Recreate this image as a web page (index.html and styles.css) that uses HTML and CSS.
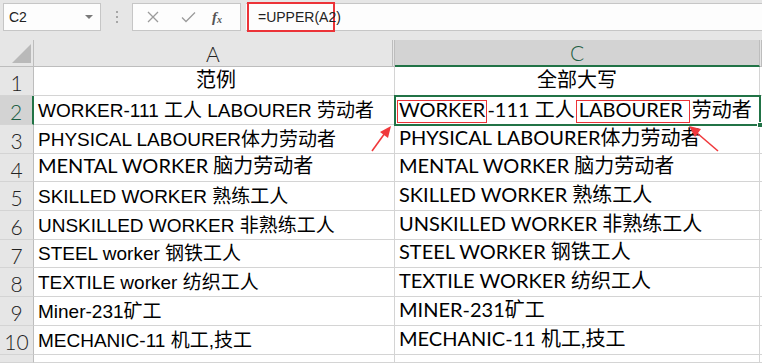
FILE: index.html
```html
<!DOCTYPE html>
<html lang="zh-CN">
<head>
    <meta charset="UTF-8">
    <meta name="viewport" content="width=device-width, initial-scale=1.0">
    <title>UPPER 函数</title>
    <link rel="stylesheet" href="styles.css">
</head>
<body>
    <div class="toolbar">
        <div class="name-box">
            <span>C2</span>
            <span class="caret"></span>
        </div>
        <div class="grip"><span></span><span></span><span></span></div>
        <div class="fx-box">
            <svg class="tool-icon" width="12" height="12" viewBox="0 0 12 12"><path d="M1 1L11 11M11 1L1 11" stroke="#9b9b9b" stroke-width="1.3" fill="none"/></svg>
            <svg class="tool-icon" width="15" height="12" viewBox="0 0 15 12"><path d="M1 6.5L5 10.5L14 1.5" stroke="#9b9b9b" stroke-width="1.3" fill="none"/></svg>
            <span class="fx">f<sub>x</sub></span>
        </div>
        <div class="formula">
            <span class="formula-text">=UPPER(A2)</span>
        </div>
    </div>

    <div class="sheet">
        <div class="corner"><span class="corner-tri"></span></div>
        <div class="col-head col-a">A</div>
        <div class="col-head col-c active">C</div>
        <div class="col-head edge"></div>

        <div class="row-head">1</div>
        <div class="cell cell-a thin center">范例</div>
        <div class="cell cell-c center">全部大写</div>
        <div class="cell edge"></div>

        <div class="row-head active">2</div>
        <div class="cell cell-a">WORKER-111 工人 LABOURER 劳动者</div>
        <div class="cell cell-c selected">
            <span class="txt"><span class="mark">WORKER</span>-111 工人<span class="mark mark-wide">LABOURER</span>劳动者</span>
            <span class="handle"></span>
        </div>
        <div class="cell edge"></div>

        <div class="row-head">3</div>
        <div class="cell cell-a">PHYSICAL LABOURER体力劳动者</div>
        <div class="cell cell-c">PHYSICAL LABOURER体力劳动者</div>
        <div class="cell edge"></div>

        <div class="row-head">4</div>
        <div class="cell cell-a thin">MENTAL WORKER 脑力劳动者</div>
        <div class="cell cell-c">MENTAL WORKER 脑力劳动者</div>
        <div class="cell edge"></div>

        <div class="row-head">5</div>
        <div class="cell cell-a">SKILLED WORKER 熟练工人</div>
        <div class="cell cell-c">SKILLED WORKER 熟练工人</div>
        <div class="cell edge"></div>

        <div class="row-head">6</div>
        <div class="cell cell-a">UNSKILLED WORKER 非熟练工人</div>
        <div class="cell cell-c">UNSKILLED WORKER 非熟练工人</div>
        <div class="cell edge"></div>

        <div class="row-head">7</div>
        <div class="cell cell-a">STEEL worker 钢铁工人</div>
        <div class="cell cell-c">STEEL WORKER 钢铁工人</div>
        <div class="cell edge"></div>

        <div class="row-head">8</div>
        <div class="cell cell-a">TEXTILE worker 纺织工人</div>
        <div class="cell cell-c">TEXTILE WORKER 纺织工人</div>
        <div class="cell edge"></div>

        <div class="row-head">9</div>
        <div class="cell cell-a">Miner-231矿工</div>
        <div class="cell cell-c">MINER-231矿工</div>
        <div class="cell edge"></div>

        <div class="row-head">10</div>
        <div class="cell cell-a">MECHANIC-11 机工,技工</div>
        <div class="cell cell-c">MECHANIC-11 机工,技工</div>
        <div class="cell edge"></div>

        <div class="row-head"></div>
        <div class="cell cell-a"></div>
        <div class="cell cell-c"></div>
        <div class="cell edge"></div>
    </div>

    <!-- 标注箭头 -->
    <svg class="arrows" width="762" height="363" viewBox="0 0 762 363">
        <path d="M372 151L385 133" stroke="#f0393c" stroke-width="1.6" fill="none"/>
        <path d="M391 126L380 132L388 138Z" fill="#f0393c"/>
        <path d="M718 151L697 133" stroke="#f0393c" stroke-width="1.6" fill="none"/>
        <path d="M689 126L701 129L695 137Z" fill="#f0393c"/>
    </svg>
</body>
</html>
```

FILE: styles.css
```css
* {
    margin: 0;
    padding: 0;
    box-sizing: border-box;
}

body {
    background-color: #e6e6e6;
    font-family: "Liberation Sans", "Noto Sans CJK SC", sans-serif;
    width: 762px;
    height: 363px;
    overflow: hidden;
    position: relative;
}

/* 编辑栏 */
.toolbar {
    display: flex;
    height: 40px;
    padding: 3px 0 9px 3px;
}

.name-box {
    width: 98px;
    background: #fdfdfd;
    border: 1px solid #c6c6c6;
    display: flex;
    align-items: center;
    justify-content: space-between;
    padding: 0 7px 0 5px;
    font-size: 14px;
    color: #222;
}

.caret {
    width: 0;
    height: 0;
    border-left: 4px solid transparent;
    border-right: 4px solid transparent;
    border-top: 4px solid #7a7a7a;
}

.grip {
    width: 31px;
    display: flex;
    flex-direction: column;
    align-items: center;
    justify-content: center;
    gap: 3px;
}

.grip span {
    width: 2px;
    height: 2px;
    background: #a6a6a6;
}

.fx-box {
    width: 109px;
    background: #fdfdfd;
    border: 1px solid #c6c6c6;
    display: flex;
    align-items: center;
    padding-left: 14px;
    gap: 22px;
}

.fx {
    font-family: "Liberation Serif", serif;
    font-style: italic;
    font-weight: bold;
    font-size: 15px;
    color: #555;
    margin-left: -6px;
}

.fx sub {
    font-size: 10px;
    vertical-align: -1px;
}

.formula {
    flex: 1;
    margin-left: 5px;
    background: #fdfdfd;
    border-top: 1px solid #c6c6c6;
    border-bottom: 1px solid #c6c6c6;
    display: flex;
}

.formula-text {
    width: 88px;
    margin: -2px 0 -2px 1px;
    border: 2px solid #ec3338;
    display: flex;
    align-items: center;
    padding-left: 9px;
    font-size: 14px;
    color: #222;
}

/* 表格区 */
.sheet {
    display: grid;
    grid-template-columns: 34px 361px 365px 2px;
    grid-template-rows: 27px 29px 29px 29px 28px 29px 29px 28px 29px 29px 29px 8px;
    background: #fff;
}

.corner {
    background: #e6e6e6;
    border-right: 1px solid #bdbdbd;
    border-bottom: 1px solid #bdbdbd;
    position: relative;
}

.corner-tri {
    position: absolute;
    right: 2px;
    bottom: 3px;
    width: 0;
    height: 0;
    border-left: 19px solid transparent;
    border-bottom: 19px solid #b9b9b9;
}

.col-head {
    background: #e6e6e6;
    border-right: 1px solid #bdbdbd;
    border-bottom: 1px solid #bdbdbd;
    display: flex;
    align-items: center;
    justify-content: center;
    font-family: "Lato", "Noto Sans CJK SC", sans-serif;
    font-weight: 300;
    font-size: 21px;
    color: #222;
}

.col-a {
    border-right: 3px double #bdbdbd;
}

.col-head.active {
    background: #d3d3d3;
    color: #1d5e43;
    border-bottom: 2px solid #217346;
}

.row-head {
    background: #e6e6e6;
    border-right: 1px solid #bdbdbd;
    border-bottom: 1px solid #d4d4d4;
    display: flex;
    align-items: center;
    justify-content: center;
    font-family: "Lato", "Noto Sans CJK SC", sans-serif;
    font-weight: 300;
    font-size: 21px;
    color: #222;
    padding-top: 3px;
}

.row-head.active {
    background: #d3d3d3;
    color: #1d5e43;
    border-right: 2px solid #217346;
}

.cell {
    border-right: 1px solid #d4d4d4;
    border-bottom: 1px solid #d4d4d4;
    display: flex;
    align-items: flex-end;
    padding: 0 0 2px 4px;
    white-space: nowrap;
    font-size: 19px;
    color: #000;
}

.cell.center {
    justify-content: center;
    padding-left: 0;
}

.cell-c, .cell-a.thin {
    font-family: "Lato", "Noto Sans CJK SC", sans-serif;
    font-weight: 400;
    font-size: 20px;
    padding-left: 4px;
}

.cell.edge {
    border-right: none;
}

.cell.selected {
    outline: 2px solid #217346;
    outline-offset: -1px;
    position: relative;
    padding-left: 2px;
    padding-bottom: 1px;
}

.mark {
    display: inline-block;
    line-height: 16px;
    border: 1px solid #ec3338;
    padding: 0 1px 5px 1px;
}

.mark-wide {
    margin: 0 2px 0 1px;
    padding: 0 6px 5px 2px;
}

.handle {
    position: absolute;
    right: -4px;
    bottom: -4px;
    width: 6px;
    height: 6px;
    background: #217346;
    border: 1px solid #fff;
}

.arrows {
    position: absolute;
    left: 0;
    top: 0;
    pointer-events: none;
}
```
